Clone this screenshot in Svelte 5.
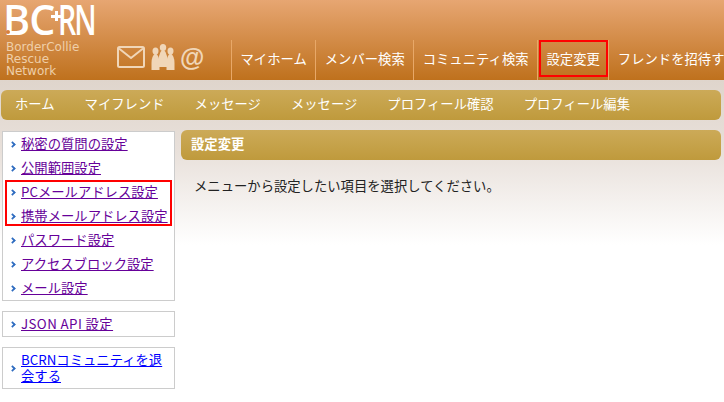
<script lang="ts">
	const globalNav = ['マイホーム', 'メンバー検索', 'コミュニティ検索', '設定変更', 'フレンドを招待する'];
	const localNav = ['ホーム', 'マイフレンド', 'メッセージ', 'メッセージ', 'プロフィール確認', 'プロフィール編集'];
	const sideBefore = ['秘密の質問の設定', '公開範囲設定'];
	const sideMarked = ['PCメールアドレス設定', '携帯メールアドレス設定'];
	const sideAfter = ['パスワード設定', 'アクセスブロック設定', 'メール設定'];
</script>

<div class="page">
	<header class="head">
		<div class="brand">
			<div class="logo">
				<span class="bc">BC</span>
				<span class="rn">RN</span>
				<span class="plus"></span>
				<span class="flower"></span>
			</div>
			<div class="tagline">BorderCollie<br />Rescue<br />Network</div>
		</div>
		<div class="icons">
			<svg width="28" height="22" viewBox="0 0 28 22" fill="none" stroke="#f0d6b8" stroke-width="2" stroke-linejoin="round">
				<rect x="1" y="1" width="26" height="20" rx="1.500" />
				<path d="M2 2.500l12 9.500L26 2.500" />
			</svg>
			<svg class="people" width="24" height="26" viewBox="0 0 24 26" fill="#f0d6b8">
				<ellipse cx="4.500" cy="7" rx="3" ry="3.500" />
				<path d="M.5 26V19Q.5 12 4.500 9Q8.500 12 8.500 19V26z" />
				<ellipse cx="19.500" cy="7" rx="3" ry="3.500" />
				<path d="M15.500 26V19Q15.500 12 19.500 9Q23.500 12 23.500 19V26z" />
				<ellipse cx="12" cy="3.500" rx="3.200" ry="3.500" />
				<path d="M7 23Q7 9 12 5Q17 9 17 23z" />
			</svg>
			<span class="at">@</span>
		</div>
		<nav class="global">
			{#each globalNav as item}
				<a href="#top" class:current={item === '設定変更'}>{item}</a>
			{/each}
		</nav>
	</header>

	<nav class="local">
		{#each localNav as item}
			<a href="#top">{item}</a>
		{/each}
	</nav>

	<div class="body">
		<aside class="side">
			<div class="box">
				{#each sideBefore as item}
					<div class="row"><a class="seen" href="#top">{item}</a></div>
				{/each}
				<div class="marked">
					{#each sideMarked as item}
						<div class="row"><a class="seen" href="#top">{item}</a></div>
					{/each}
				</div>
				{#each sideAfter as item}
					<div class="row"><a class="seen" href="#top">{item}</a></div>
				{/each}
			</div>
			<div class="box">
				<div class="row single json"><a class="seen" href="#top">JSON API 設定</a></div>
			</div>
			<div class="box">
				<div class="row single"><a href="#top">BCRNコミュニティを退会する</a></div>
			</div>
		</aside>
		<main class="main">
			<h2>設定変更</h2>
			<p>メニューから設定したい項目を選択してください。</p>
		</main>
	</div>
</div>

<style>
	:global(body) {
		margin: 0;
		background: #fff;
	}
	.page {
		width: 724px;
		height: 402px;
		overflow: hidden;
		font-family: "Noto Sans CJK JP", "Liberation Sans", sans-serif;
		font-size: 13.33px;
		background: linear-gradient(#dfd5cc 80px, #e8e0da 150px, #fff 245px);
	}
	.head {
		height: 80px;
		display: flex;
		background: linear-gradient(#e7a672, #bf711d);
		white-space: nowrap;
		overflow: hidden;
	}
	.brand {
		width: 117px;
		flex: none;
		padding: 0 0 0 5px;
		box-sizing: border-box;
		color: #fff;
	}
	.logo {
		position: relative;
		display: flex;
		height: 40px;
		font-family: "Open Sans", sans-serif;
		font-size: 42px;
		font-weight: 600;
		line-height: 38px;
	}
	.bc,
	.rn {
		display: block;
		transform-origin: left center;
	}
	.bc {
		width: 53px;
		margin-left: -2px;
		letter-spacing: -1px;
		transform: scaleX(0.98);
	}
	.rn {
		margin-left: 2px;
		letter-spacing: -3px;
		transform: scaleX(0.68);
	}
	.plus {
		position: absolute;
		left: 46px;
		top: 11px;
		width: 10px;
		height: 10px;
		background:
			linear-gradient(#fff, #fff) center / 10px 3px no-repeat,
			linear-gradient(#fff, #fff) center / 3px 10px no-repeat;
	}
	.flower {
		position: absolute;
		left: 1px;
		top: 30px;
		width: 4px;
		height: 4px;
		border-radius: 50%;
		background: #d9803a;
	}
	.tagline {
		font-family: "DejaVu Sans", sans-serif;
		font-size: 12px;
		line-height: 12px;
		color: #efcfa9;
		margin: 1px 0 0 1px;
	}
	.icons {
		width: 114px;
		flex: none;
		display: flex;
		align-items: center;
		gap: 6px;
		padding-top: 34px;
		box-sizing: border-box;
		height: 80px;
	}
	.people {
		margin-right: 1px;
	}
	.at {
		font-family: "Liberation Sans", sans-serif;
		font-size: 25px;
		font-weight: 700;
		line-height: 26px;
		color: #f0d6b8;
		margin-left: -2px;
	}
	.global {
		display: flex;
		align-items: flex-end;
		height: 80px;
	}
	.global a {
		height: 40px;
		line-height: 38px;
		padding: 0 8.5px;
		color: #fff;
		text-decoration: none;
		border-left: 1px solid #e8a868;
		box-sizing: border-box;
		position: relative;
	}
	.global a.current::after {
		content: "";
		position: absolute;
		left: 1px;
		right: 0;
		top: 0;
		bottom: 3px;
		border: 2px solid #f00;
	}
	.local {
		height: 30px;
		margin: 10px 3px 0 1px;
		padding-left: 14px;
		display: flex;
		gap: 30px;
		align-items: center;
		border-radius: 6px;
		background: linear-gradient(#ccaa58, #bf9a3c);
		white-space: nowrap;
		line-height: 26px;
	}
	.local a {
		color: #fff;
		text-decoration: none;
		margin-top: -3px;
	}
	.body {
		display: flex;
		gap: 6px;
		padding: 10px 3px 0 2px;
	}
	.side {
		width: 173px;
		padding-top: 1px;
		flex: none;
		display: flex;
		flex-direction: column;
		gap: 10px;
	}
	.box {
		background: #fff;
		border: 1px solid #ccc;
	}
	.row {
		padding: 0 6px 0 18px;
		line-height: 24px;
		position: relative;
	}
	.row::before {
		content: "";
		position: absolute;
		left: 7px;
		top: 50%;
		width: 3px;
		height: 3px;
		margin-top: -2px;
		border-top: 2px solid #2f6cc0;
		border-right: 2px solid #2f6cc0;
		transform: rotate(45deg) scale(0.9);
	}
	.row a {
		color: #00f;
	}
	.row a.seen {
		color: #660099;
	}
	.row.single {
		line-height: 16px;
		padding-top: 4px;
		padding-bottom: 4px;
	}
	.row.json {
		letter-spacing: 0.4px;
	}
	.marked {
		position: relative;
	}
	.marked::after {
		content: "";
		position: absolute;
		left: 2px;
		right: 2px;
		top: 0;
		bottom: 2px;
		border: 2px solid #f00;
	}
	.main {
		flex: 1;
	}
	.main h2 {
		margin: 0;
		height: 30px;
		line-height: 28px;
		padding-left: 10px;
		font-size: 13.33px;
		color: #fff;
		border-radius: 6px;
		background: linear-gradient(#ccaa58, #bf9a3c);
	}
	.main p {
		margin: 16px 0 0 13px;
		font-size: 13.33px;
		color: #222;
	}
</style>
